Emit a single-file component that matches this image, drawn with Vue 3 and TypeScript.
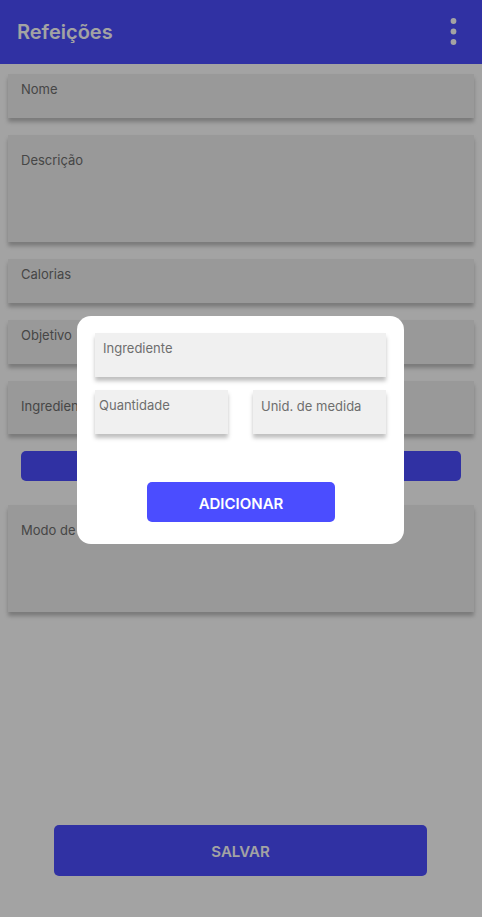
<script setup lang="ts">
import { reactive, ref } from 'vue'

interface Field {
  id: 'nome' | 'descricao' | 'calorias' | 'objetivo' | 'ingredientes' | 'modo'
  label: string
  kind: 'short' | 'medium' | 'long'
}

const mainFields: Field[] = [
  { id: 'nome', label: 'Nome', kind: 'short' },
  { id: 'descricao', label: 'Descrição', kind: 'long' },
  { id: 'calorias', label: 'Calorias', kind: 'short' },
  { id: 'objetivo', label: 'Objetivo', kind: 'short' },
  { id: 'ingredientes', label: 'Ingredientes', kind: 'medium' },
]

const meal = reactive<Record<Field['id'], string>>({
  nome: '',
  descricao: '',
  calorias: '',
  objetivo: '',
  ingredientes: '',
  modo: '',
})

const ingredient = reactive({ nome: '', quantidade: '', unidade: '' })
const dialogOpen = ref(true)

function addIngredient(): void {
  const entry = [ingredient.quantidade, ingredient.unidade, ingredient.nome].filter(Boolean).join(' ')
  if (entry) {
    meal.ingredientes = meal.ingredientes ? `${meal.ingredientes}, ${entry}` : entry
  }
  dialogOpen.value = false
}
</script>

<template>
  <div class="page">
    <header class="bar">
      <h1>Refeições</h1>
      <button class="menu" type="button" aria-label="Menu">
        <svg width="7" height="28" viewBox="0 0 7 28" fill="currentColor" aria-hidden="true">
          <circle cx="3.5" cy="3" r="2.9" />
          <circle cx="3.5" cy="13.5" r="2.9" />
          <circle cx="3.5" cy="24" r="2.9" />
        </svg>
      </button>
    </header>

    <form class="form" @submit.prevent>
      <label v-for="f in mainFields" :key="f.id" class="field" :class="f.kind">
        <span>{{ f.label }}</span>
        <textarea v-if="f.kind === 'long'" v-model="meal[f.id]"></textarea>
        <input v-else v-model="meal[f.id]" type="text" />
      </label>
      <button class="btn open" type="button" aria-label="Adicionar ingrediente" @click="dialogOpen = true"></button>
      <label class="field long">
        <span>Modo de preparo</span>
        <textarea v-model="meal.modo"></textarea>
      </label>
      <button class="btn save" type="submit">SALVAR</button>
    </form>

    <div v-if="dialogOpen" class="overlay">
      <form class="dialog" role="dialog" aria-modal="true" @submit.prevent="addIngredient">
        <label class="field short inset">
          <span>Ingrediente</span>
          <input v-model="ingredient.nome" type="text" />
        </label>
        <div class="pair">
          <label class="field short tight">
            <span>Quantidade</span>
            <input v-model="ingredient.quantidade" type="text" />
          </label>
          <label class="field short inset unit">
            <span>Unid. de medida</span>
            <input v-model="ingredient.unidade" type="text" />
          </label>
        </div>
        <button class="btn add" type="submit">ADICIONAR</button>
      </form>
    </div>
  </div>
</template>

<style>
body {
  margin: 0;
}
</style>

<style scoped>
* {
  box-sizing: border-box;
}

.page {
  min-height: 100vh;
  display: flex;
  flex-direction: column;
  background: #fff;
  font-family: Inter, "Liberation Sans", sans-serif;
}

.bar {
  height: 64px;
  padding: 0 20px 0 17px;
  display: flex;
  align-items: center;
  justify-content: space-between;
  background: #4b4dff;
  color: #fff;
}

h1 {
  margin: 0;
  font-size: 20px;
  line-height: 24px;
  font-weight: 600;
}

.menu {
  display: flex;
  padding: 0 5px;
  border: 0;
  background: none;
  color: inherit;
}

.form {
  flex: 1;
  display: flex;
  flex-direction: column;
  gap: 17px;
  padding: 10px 8px 41px;
}

.field {
  display: flex;
  flex-direction: column;
  padding: 7px 13px 4px;
  background: #f0f0f0;
  box-shadow: 0 4px 4px rgba(0, 0, 0, 0.25);
  color: #6e6e6e;
  font-size: 13px;
  line-height: 16px;
}

.field input,
.field textarea {
  flex: 1;
  width: 100%;
  min-height: 0;
  padding: 0;
  border: 0;
  outline: 0;
  resize: none;
  background: none;
  font: inherit;
  color: #222;
}

.short {
  height: 44px;
}

.medium {
  height: 53px;
  padding-top: 17px;
}

.long {
  height: 107px;
  padding-top: 17px;
}

.inset {
  padding-left: 8px;
}

.tight {
  padding-left: 4px;
}

.btn {
  border: 0;
  padding: 3px 0 0;
  border-radius: 5px;
  background: #4b4dff;
  color: #fff;
  font-family: inherit;
  font-size: 15px;
  line-height: 18px;
  font-weight: 600;
}

.open {
  height: 30px;
  margin: 0 13px 7px;
}

.save {
  height: 51px;
  margin: auto 47px 0 46px;
}

.overlay {
  position: fixed;
  inset: 0;
  display: flex;
  align-items: center;
  padding: 0 78px 57px 77px;
  background: rgba(0, 0, 0, 0.36);
}

.dialog {
  flex: 1;
  display: flex;
  flex-direction: column;
  gap: 13px;
  padding: 17px 18px 22px;
  border-radius: 14px;
  background: #fff;
}

.pair {
  display: grid;
  grid-template-columns: 1fr 1fr;
  gap: 25px;
}

.unit {
  padding-top: 8px;
}

.add {
  height: 40px;
  margin: 35px 51px 0 52px;
}
</style>
